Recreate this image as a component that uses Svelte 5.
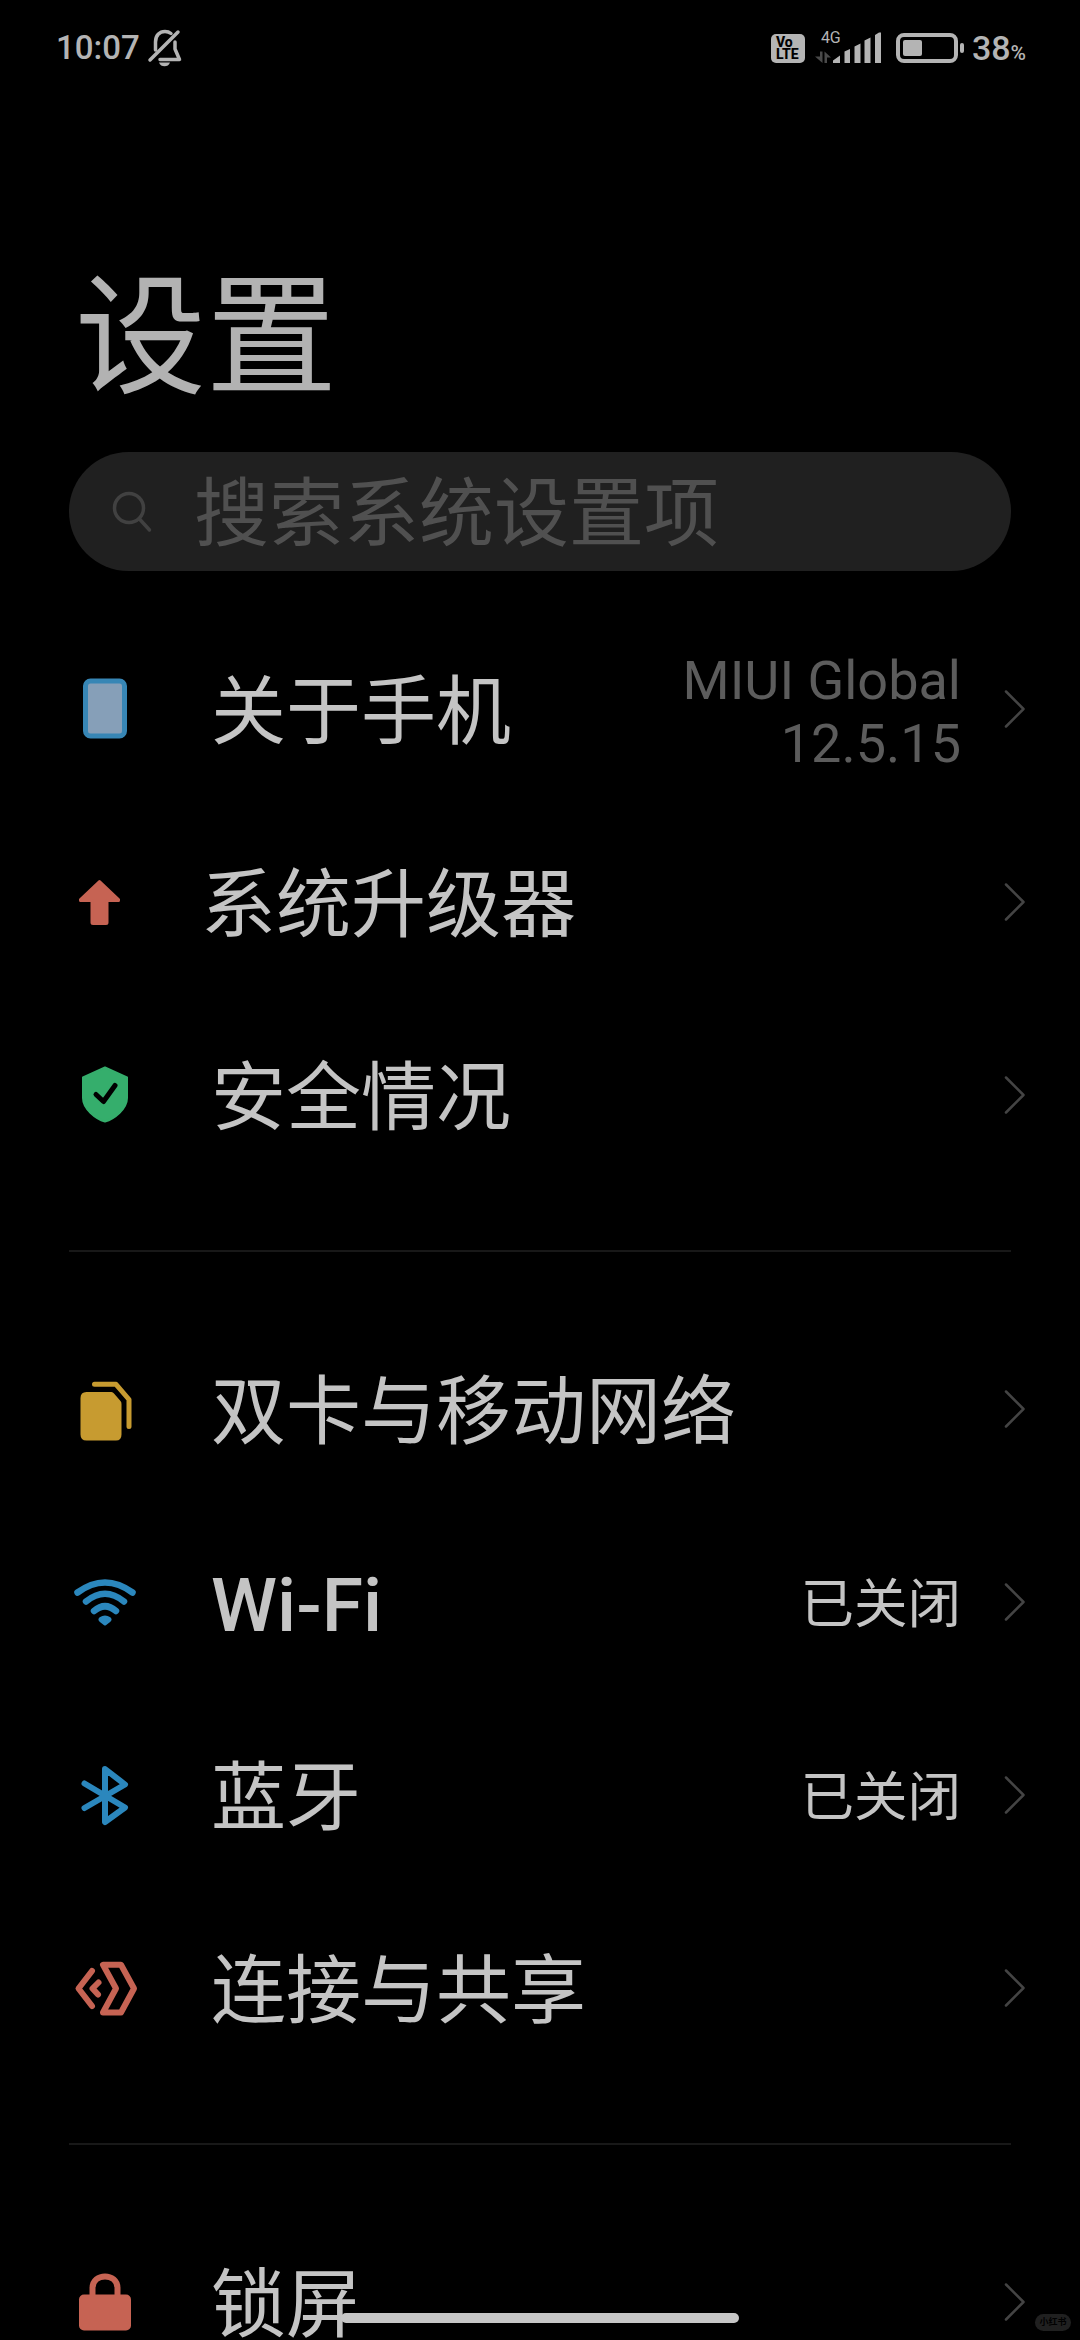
<script lang="ts">
  type Item = { icon: string; label: string; value?: string; muted?: boolean; latin?: boolean; shifted?: boolean };

  const groups: Item[][] = [
    [
      { icon: 'phone', label: '关于手机', value: 'MIUI Global 12.5.15', muted: true },
      { icon: 'update', label: '系统升级器', shifted: true },
      { icon: 'shield', label: '安全情况' },
    ],
    [
      { icon: 'sim', label: '双卡与移动网络' },
      { icon: 'wifi', label: 'Wi-Fi', value: '已关闭', latin: true },
      { icon: 'bluetooth', label: '蓝牙', value: '已关闭' },
      { icon: 'share', label: '连接与共享' },
    ],
    [{ icon: 'lock', label: '锁屏' }],
  ];
</script>

<div class="screen">
  <header class="status-bar">
    <span class="time">10:07</span>
    <svg class="bell" width="36" height="40" viewBox="0 0 36 40" fill="none" stroke="#b4b4b4" stroke-width="3.5" stroke-linecap="round">
      <path d="M8.5 22V14C8.5 7.500 12.500 3.500 18 3.500C20.500 3.500 22.500 4.300 24 5.500" />
      <path d="M28 14V21L32.500 31.500H13" stroke-linejoin="round" />
      <path d="M3 32L31 4" />
      <path d="M12 34.500H23C22 37.300 20 38.300 17.500 38.300S13 37.300 12 34.500Z" fill="#b4b4b4" stroke="none" />
    </svg>

    <div class="status-right">
      <div class="volte"><span>Vo</span><span>LTE</span></div>
      <div class="signal">
        <span class="network">4G</span>
        <svg width="68" height="32" viewBox="0 0 68 32" fill="#b4b4b4">
          <path d="M5 20.500h2.500V32L0 25.500h5zM9.500 32V20.500L16 26.500h-4V32z" fill="#4a4a4a" />
          <path d="M18 32V29.500L25 24.500V32zM29.500 32V20.500L35 18V32zM39.500 32V15.500L45.500 12.500V32zM49.500 32V9.500L55.500 6.500V32zM60 32V4L64 1.500H66V32z" />
        </svg>
      </div>
      <svg class="battery" width="68" height="30" viewBox="0 0 68 30">
        <rect x="2" y="2" width="58" height="26" rx="6" fill="none" stroke="#b4b4b4" stroke-width="4" />
        <rect x="7" y="7" width="19" height="16" rx="2" fill="#b4b4b4" />
        <rect x="64" y="10" width="4" height="10" rx="2" fill="#b4b4b4" />
      </svg>
      <span class="percent">38<small>%</small></span>
    </div>
  </header>

  <h1>设置</h1>

  <div class="search">
    <svg width="42" height="42" viewBox="0 0 42 42" fill="none" stroke="#414141" stroke-width="3.500" stroke-linecap="round">
      <circle cx="17" cy="17" r="14.500" />
      <path d="M27.500 28L37.500 39" />
    </svg>
    <span>搜索系统设置项</span>
  </div>

  <main>
    {#each groups as group}
      <section>
        {#each group as item}
          <div class="row">
            <svg class="icon" viewBox="0 0 100 100" fill="none" stroke-linecap="round" stroke-linejoin="round">
              {#if item.icon === 'phone'}
                <rect x="25.500" y="22" width="39" height="55" rx="5" fill="#869fb8" stroke="#3786b5" stroke-width="5" />
              {:else if item.icon === 'update'}
                <path d="M39.500 29.500L20.500 47.500V48.500H32V70.500Q32 71.500 33 71.500H46Q47 71.500 47 70.500V48.500H58.500V47.500Z" fill="#c66353" stroke="#c66353" stroke-width="3" />
              {:else if item.icon === 'shield'}
                <path d="M45 22.500L67 32.500V53C67 64 54 74 45 76.500C36 74 23 64 23 53V32.500Z" fill="#35ae6c" stroke="#35ae6c" stroke-width="2" />
                <path d="M36 49.500L43.500 56.500L55 40.500" stroke="#000" stroke-width="5" />
              {:else if item.icon === 'sim'}
                <path d="M26.500 33H51.500Q53 33 54 34.500L60.500 42Q61.500 43 61.500 45V75.500Q61.500 81.500 56 81.500H26.500Q20.500 81.500 20.500 75.500V39Q20.500 33 26.500 33Z" fill="#c79b30" />
                <path d="M34.500 25.300H56L69 40.500V67.500" stroke="#c79b30" stroke-width="5" />
              {:else if item.icon === 'wifi'}
                <g stroke="#2b87bd" stroke-width="6.500">
                  <path d="M17.500 40.500Q45 20.500 72.500 40.500" />
                  <path d="M26 49.500Q45 34 64 49.500" />
                  <path d="M34 59Q45 49.500 56 59" />
                </g>
                <path d="M40.500 66.500Q45 63.500 49.500 66.500Q50.500 67.500 49.500 68.500L45 72L40.500 68.500Q39.500 67.500 40.500 66.500Z" fill="#2b87bd" stroke="#2b87bd" stroke-width="3" />
              {:else if item.icon === 'bluetooth'}
                <path d="M24.500 38.500L65 62.500L45 77V24L65 39.500L24.500 63" stroke="#2b87bd" stroke-width="6" />
              {:else if item.icon === 'share'}
                <g stroke="#c66353" stroke-width="6">
                  <path d="M32 33L18.500 50.500L32 68" />
                  <path d="M38.500 44.500L32.500 50.500L38 56.500" />
                  <path d="M43 26.800H61L74 50.500L61 74.500H43L56 50.500Z" />
                </g>
              {:else if item.icon === 'lock'}
                <path d="M32.500 46V36C32.500 20.500 57.500 20.500 57.500 36V46" stroke="#c66353" stroke-width="6" />
                <rect x="19" y="42.500" width="52" height="36" rx="5" fill="#c66353" />
              {/if}
            </svg>
            <span class="label" class:latin={item.latin} class:shifted={item.shifted}>{item.label}</span>
            {#if item.value}
              <span class="value" class:muted={item.muted}>{item.value}</span>
            {/if}
            <svg class="chevron" width="22" height="40" viewBox="0 0 22 40" fill="none" stroke="#444" stroke-width="2.500" stroke-linecap="round" stroke-linejoin="round">
              <path d="M2 2.500L19.500 20L2 37.500" />
            </svg>
          </div>
        {/each}
      </section>
    {/each}
  </main>

  <div class="home-bar"></div>
  <div class="watermark">小红书</div>
</div>

<style>
  :global(body) {
    background: #000;
  }

  .screen {
    position: relative;
    width: 1080px;
    height: 2340px;
    overflow: hidden;
    background: #000;
    color: #c4c4c4;
    font-family: Roboto, 'Noto Sans CJK SC', sans-serif;
  }

  .status-bar {
    display: flex;
    align-items: center;
    height: 96px;
    padding: 0 54px 0 56px;
    color: #b4b4b4;
  }

  .time {
    font-size: 33px;
    font-weight: 500;
    line-height: 40px;
  }

  .bell {
    margin-left: 7px;
  }

  .status-right {
    display: flex;
    align-items: center;
    margin-left: auto;
  }

  .volte {
    display: flex;
    flex-direction: column;
    justify-content: center;
    width: 34px;
    height: 29px;
    padding-left: 5px;
    box-sizing: border-box;
    border-radius: 5px;
    background: #b4b4b4;
    color: #000;
    font-size: 14px;
    font-weight: 800;
    line-height: 12px;
  }

  .signal {
    position: relative;
    height: 32px;
    margin: -2px 13px 0 10px;
  }

  .signal svg {
    display: block;
  }

  .network {
    position: absolute;
    left: 6px;
    top: -1px;
    font-size: 16px;
    line-height: 16px;
  }

  .percent {
    margin-left: 8px;
    padding-top: 4px;
    font-size: 34px;
    font-weight: 500;
    line-height: 40px;
  }

  .percent small {
    font-size: 21px;
  }

  h1 {
    height: 356px;
    margin: 0;
    padding: 147px 0 0 75px;
    box-sizing: border-box;
    color: #b2b2b2;
    font-size: 131px;
    font-weight: 400;
    line-height: 190px;
  }

  .search {
    display: flex;
    align-items: center;
    height: 119px;
    margin: 0 69px;
    padding-left: 43px;
    border-radius: 60px;
    background: #202020;
    color: #505050;
    font-size: 75px;
    line-height: 113px;
  }

  .search span {
    margin-left: 40px;
    padding-top: 6px;
  }

  main {
    padding-top: 41px;
  }

  section + section::before {
    content: '';
    display: block;
    height: 2px;
    margin: 59px 69px 60px;
    background: #181818;
  }

  .row {
    display: flex;
    align-items: center;
    height: 193px;
    padding: 0 54px 0 60px;
  }

  .icon {
    flex: none;
    width: 100px;
    height: 100px;
  }

  .label {
    flex: 1;
    margin-left: 51px;
    padding-top: 6px;
    font-size: 75px;
    line-height: 110px;
    white-space: nowrap;
  }

  .label.latin {
    font-weight: 500;
  }

  .label.shifted {
    margin-left: 41px;
  }

  .value {
    width: 300px;
    padding-top: 6px;
    font-size: 53.5px;
    line-height: 63px;
    text-align: right;
  }

  .value.muted {
    color: #5c5c5c;
    font-size: 54px;
  }

  .chevron {
    flex: none;
    margin-left: 43px;
  }

  .home-bar {
    position: absolute;
    left: 341px;
    bottom: 17px;
    width: 398px;
    height: 10px;
    border-radius: 5px;
    background: #c6c6c6;
  }

  .watermark {
    position: absolute;
    right: 9px;
    bottom: 9px;
    width: 36px;
    height: 17px;
    border-radius: 9px;
    background: #202020;
    color: #000;
    font-size: 9px;
    font-weight: 700;
    line-height: 17px;
    text-align: center;
  }
</style>
